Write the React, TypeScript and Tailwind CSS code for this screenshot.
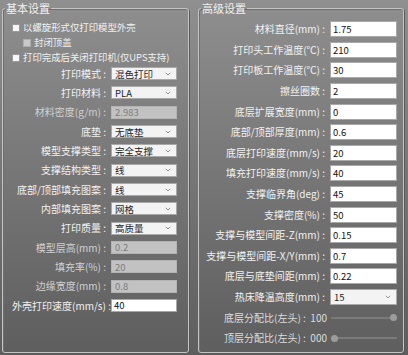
const FONT = "font-['Noto_Sans_CJK_SC','Noto_Sans',sans-serif]"

type Field = { label: string; value: string; kind: 'input' | 'select' | 'disabled' }

const BASIC: Field[] = [
  { label: '打印模式', value: '混色打印', kind: 'select' },
  { label: '打印材料', value: 'PLA', kind: 'select' },
  { label: '材料密度(g/m)', value: '2.983', kind: 'disabled' },
  { label: '底垫', value: '无底垫', kind: 'select' },
  { label: '模型支撑类型', value: '完全支撑', kind: 'select' },
  { label: '支撑结构类型', value: '线', kind: 'select' },
  { label: '底部/顶部填充图案', value: '线', kind: 'select' },
  { label: '内部填充图案', value: '网格', kind: 'select' },
  { label: '打印质量', value: '高质量', kind: 'select' },
  { label: '模型层高(mm)', value: '0.2', kind: 'disabled' },
  { label: '填充率(%)', value: '20', kind: 'disabled' },
  { label: '边缘宽度(mm)', value: '0.8', kind: 'disabled' },
  { label: '外壳打印速度(mm/s)', value: '40', kind: 'input' },
]

const ADVANCED: Field[] = [
  { label: '材料直径(mm)', value: '1.75', kind: 'input' },
  { label: '打印头工作温度(℃)', value: '210', kind: 'input' },
  { label: '打印板工作温度(℃)', value: '30', kind: 'input' },
  { label: '擦丝圈数', value: '2', kind: 'input' },
  { label: '底层扩展宽度(mm)', value: '0', kind: 'input' },
  { label: '底部/顶部厚度(mm)', value: '0.6', kind: 'input' },
  { label: '底层打印速度(mm/s)', value: '20', kind: 'input' },
  { label: '填充打印速度(mm/s)', value: '40', kind: 'input' },
  { label: '支撑临界角(deg)', value: '45', kind: 'input' },
  { label: '支撑密度(%)', value: '50', kind: 'input' },
  { label: '支撑与模型间距-Z(mm)', value: '0.15', kind: 'input' },
  { label: '支撑与模型间距-X/Y(mm)', value: '0.7', kind: 'input' },
  { label: '底层与底垫间距(mm)', value: '0.22', kind: 'input' },
  { label: '热床降温高度(mm)', value: '15', kind: 'select' },
]

function Chevron() {
  return (
    <svg width="6" height="4" viewBox="0 0 6 4" className="shrink-0">
      <path d="M0.8 0.8 L3 3 L5.2 0.8" fill="none" stroke="#8a8a8a" strokeWidth="0.9" />
    </svg>
  )
}

function Box({ field, h }: { field: Field; h: string }) {
  if (field.kind === 'disabled') {
    return (
      <div className={`${h} w-full bg-[#c2c2c2] border border-[#b4b4b4] flex items-center px-[3px] text-[9.5px] text-[#7c7c7c]`}>
        {field.value}
      </div>
    )
  }
  if (field.kind === 'select') {
    return (
      <div className={`${h} w-full bg-[#f3f3f3] border border-[#a9a9a9] flex items-center justify-between pl-[3px] pr-[5px] text-[9.5px] text-[#1e1e1e]`}>
        <span>{field.value}</span>
        <Chevron />
      </div>
    )
  }
  return (
    <div className={`${h} w-full bg-white border border-[#a9a9a9] flex items-center px-[2px] text-[9.5px] text-[#111]`}>
      {field.value}
    </div>
  )
}

function Check({ label, dim }: { label: string; dim?: boolean }) {
  return (
    <div className="h-[15px] flex items-center gap-[3px]">
      <span
        className={`shrink-0 w-[8px] h-[8px] border ${dim ? 'bg-[#c9c9c9] border-[#b0b0b0]' : 'bg-[#f7f7f7] border-[#9a9a9a]'}`}
      />
      <span className="text-[9.4px] text-[#f2f2f2] leading-none whitespace-nowrap">{label}</span>
    </div>
  )
}

function Slider({ label, value, pos }: { label: string; value: string; pos: 'left' | 'right' }) {
  return (
    <div className="h-[20.6px] flex items-center">
      <div className="w-[128px] text-right text-[10px] text-[#dedede] leading-none whitespace-nowrap">
        {label} :&nbsp;&nbsp;{value}
      </div>
      <div className="ml-[4px] w-[66px] h-[7px] relative flex items-center">
        <div className="w-full h-[2px] bg-[#7b7b7b] rounded-full" />
        <div
          className={`absolute top-0 w-[7px] h-[7px] rounded-full bg-[#9c9c9c] ${pos === 'right' ? 'right-0' : 'left-0'}`}
        />
      </div>
    </div>
  )
}

export default function App() {
  return (
    <div className={`w-[408px] h-[355px] bg-gradient-to-b from-[#8f8f8f] to-[#5e5e5e] flex gap-[9px] pt-[1px] pl-[2px] pr-[4px] pb-[1px] ${FONT}`}>
      <fieldset className="w-[188px] h-[352px] border border-[#c4c4c4] rounded-[3px] shadow-[1px_1px_0_#5a5a5a,inset_1px_1px_0_#6f6f6f] px-[9px]">
        <legend className="ml-[-7px] px-[1px] text-[11px] leading-[14px] text-[#f2f2f2]">基本设置</legend>
        <div className="pt-[5px] flex flex-col">
          <Check label="以螺旋形式仅打印模型外壳" />
          <div className="pl-[11px]">
            <Check label="封闭顶盖" dim />
          </div>
          <Check label="打印完成后关闭打印机(仅UPS支持)" />
        </div>
        <div className="mt-[-1px] flex flex-col">
          {BASIC.map((f) => (
            <div key={f.label} className="h-[19.33px] flex items-center">
              <div
                className={`w-[94px] text-right text-[10px] leading-none whitespace-nowrap ${
                  f.kind === 'disabled' ? 'text-[#d2d2d2]' : 'text-[#f2f2f2]'
                }`}
              >
                {f.label} :
              </div>
              <div className="ml-[5px] w-[66px]">
                <Box field={f} h="h-[13px]" />
              </div>
            </div>
          ))}
        </div>
      </fieldset>

      <fieldset className="w-[205px] h-[352px] border border-[#c4c4c4] rounded-[3px] shadow-[1px_1px_0_#5a5a5a,inset_1px_1px_0_#6f6f6f] pl-[0px] pr-[6px]">
        <legend className="ml-[2px] px-[1px] text-[11px] leading-[14px] text-[#f2f2f2]">高级设置</legend>
        <div className="pt-[4px] flex flex-col">
          {ADVANCED.map((f) => (
            <div key={f.label} className="h-[20.6px] flex items-center">
              <div className="w-[126px] text-right text-[10px] text-[#f2f2f2] leading-none whitespace-nowrap">
                {f.label} :
              </div>
              <div className="ml-[5px] w-[67px]">
                <Box field={f} h="h-[16px]" />
              </div>
            </div>
          ))}
          <Slider label="底层分配比(左头)" value="100" pos="right" />
          <Slider label="顶层分配比(左头)" value="000" pos="left" />
        </div>
      </fieldset>
    </div>
  )
}
